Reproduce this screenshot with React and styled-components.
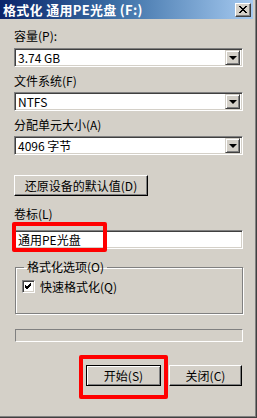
import React from 'react'
import styled, { createGlobalStyle } from 'styled-components'

const Global = createGlobalStyle`
body{
  margin:0;
  background:#d4d0c8;
}
`

const Window = styled.div`
position:relative;
width:257px;
height:418px;
box-sizing:border-box;
background:#d4d0c8;
font-family:"Noto Sans CJK SC","Liberation Sans",sans-serif;
font-size:12px;
color:#000;
border-right:1px solid #404040;
border-bottom:1px solid #404040;
box-shadow:inset -1px -1px 0 #808080, inset -3px -3px 0 #d4d0c8;
display:flex;
flex-direction:column;
`
const TitleBar = styled.div`
height:19px;
margin-right:3px;
display:flex;
align-items:center;
justify-content:space-between;
padding:0 2px 0 3px;
background:linear-gradient(to right,#0a246a,#3a6ea5 45%,#a6caf0);
color:#fff;
font-weight:bold;
font-size:13px;
letter-spacing:0.3px;
`
const CloseBtn = styled.div`
width:16px;
height:14px;
box-sizing:border-box;
background:#d4d0c8;
border-top:1px solid #fff;
border-left:1px solid #fff;
border-right:1px solid #404040;
border-bottom:1px solid #404040;
box-shadow:inset -1px -1px 0 #808080;
display:flex;
align-items:center;
justify-content:center;
`
const Body = styled.div`
display:flex;
flex-direction:column;
padding:0 13px 0 14px;
`
const Label = styled.div`
height:14px;
line-height:14px;
margin-top:${p => p.top}px;
white-space:nowrap;
`
const Field = styled.div`
height:19px;
margin-top:${p => p.top}px;
box-sizing:border-box;
background:#fff;
border-top:1px solid #808080;
border-left:1px solid #808080;
border-right:1px solid #fff;
border-bottom:1px solid #fff;
box-shadow:inset 1px 1px 0 #404040, inset -1px -1px 0 #d4d0c8;
display:flex;
align-items:center;
justify-content:space-between;
padding:0 2px 0 3px;
line-height:14px;
`
const DropBtn = styled.div`
width:15px;
height:15px;
box-sizing:border-box;
background:#d4d0c8;
border-top:1px solid #d4d0c8;
border-left:1px solid #d4d0c8;
border-right:1px solid #404040;
border-bottom:1px solid #404040;
box-shadow:inset 1px 1px 0 #fff, inset -1px -1px 0 #808080;
display:flex;
align-items:center;
justify-content:center;
`
const Arrow = styled.div`
width:0;
height:0;
border-left:4px solid transparent;
border-right:4px solid transparent;
border-top:4px solid #000;
`
const Button = styled.div`
width:${p => p.w}px;
height:21px;
margin-top:${p => p.top || 0}px;
box-sizing:border-box;
background:#d4d0c8;
border-top:1px solid ${p => p.primary ? '#000' : '#fff'};
border-left:1px solid ${p => p.primary ? '#000' : '#fff'};
border-right:1px solid #000;
border-bottom:1px solid #000;
box-shadow:${p => p.primary
  ? 'inset 1px 1px 0 #fff, inset -1px -1px 0 #808080'
  : 'inset -1px -1px 0 #808080'};
display:flex;
align-items:center;
justify-content:center;
line-height:14px;
`
const Group = styled.fieldset`
margin:11px 0 0 1px;
padding:3px 6px 0;
height:54px;
box-sizing:border-box;
border:1px solid #808080;
box-shadow:1px 1px 0 #fff, inset 1px 1px 0 #fff;
legend{
  padding:0 3px;
  margin-left:2px;
  line-height:14px;
}
`
const CheckRow = styled.label`
display:flex;
align-items:center;
gap:5px;
margin-top:1px;
`
const CheckBox = styled.div`
width:13px;
height:13px;
box-sizing:border-box;
background:#fff;
border-top:1px solid #808080;
border-left:1px solid #808080;
border-right:1px solid #fff;
border-bottom:1px solid #fff;
box-shadow:inset 1px 1px 0 #404040, inset -1px -1px 0 #d4d0c8;
display:flex;
align-items:center;
justify-content:center;
`
const Progress = styled.div`
height:13px;
margin:15px 0 0 1px;
box-sizing:border-box;
border-top:1px solid #808080;
border-left:1px solid #808080;
border-right:1px solid #fff;
border-bottom:1px solid #fff;
`
const ButtonRow = styled.div`
display:flex;
justify-content:flex-end;
gap:8px;
margin-top:23px;
padding-right:1px;
`
const Highlight = styled.div`
position:absolute;
left:${p => p.x}px;
top:${p => p.y}px;
width:${p => p.w}px;
height:${p => p.h}px;
box-sizing:border-box;
border:4px solid #ff0000;
border-radius:2px;
pointer-events:none;
`

function Select({ value, top }) {
  return (
    <Field top={top}>
      <span>{value}</span>
      <DropBtn><Arrow /></DropBtn>
    </Field>
  )
}

export default function App() {
  return (
    <>
      <Global />
      <Window>
        <TitleBar>
          <span>格式化 通用PE光盘 (F:)</span>
          <CloseBtn>
            <svg width="8" height="7" viewBox="0 0 8 7">
              <path d="M0 0L7 7M1 0L8 7M7 0L0 7M8 0L1 7" stroke="#000" strokeWidth="1" />
            </svg>
          </CloseBtn>
        </TitleBar>
        <Body>
          <Label top={10}>容量(P):</Label>
          <Select top={5} value="3.74 GB" />
          <Label top={7}>文件系统(F)</Label>
          <Select top={4} value="NTFS" />
          <Label top={7}>分配单元大小(A)</Label>
          <Select top={4} value="4096 字节" />
          <Button w={134} top={20}>还原设备的默认值(D)</Button>
          <Label top={11}>卷标(L)</Label>
          <Field top={9}>通用PE光盘</Field>
          <Group>
            <legend>格式化选项(O)</legend>
            <CheckRow>
              <CheckBox>
                <svg width="7" height="7" viewBox="0 0 7 7">
                  <path d="M0 2L2 4L6 0M0 3L2 5L6 1M0 4L2 6L6 2" stroke="#000" strokeWidth="1" fill="none" />
                </svg>
              </CheckBox>
              <span>快速格式化(Q)</span>
            </CheckRow>
          </Group>
          <Progress />
          <ButtonRow>
            <Button w={75} primary>开始(S)</Button>
            <Button w={73}>关闭(C)</Button>
          </ButtonRow>
        </Body>
        <Highlight x={12} y={222} w={95} h={30} />
        <Highlight x={79} y={355} w={89} h={44} />
      </Window>
    </>
  )
}
